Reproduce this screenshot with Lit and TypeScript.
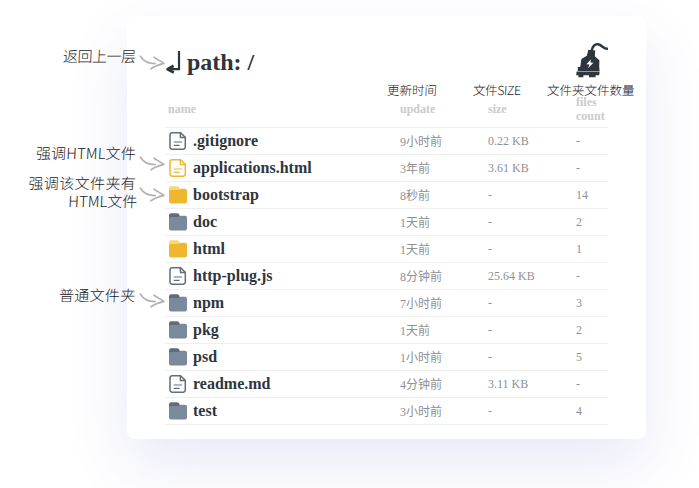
import { LitElement, html, svg, css } from "lit";
import { customElement, property } from "lit/decorators.js";

type Kind = "file" | "page" | "dir" | "web";
interface Entry { name: string; kind: Kind; update: string; size: string; count: string; }

const entries: Entry[] = [
  { name: ".gitignore", kind: "file", update: "9小时前", size: "0.22 KB", count: "-" },
  { name: "applications.html", kind: "page", update: "3年前", size: "3.61 KB", count: "-" },
  { name: "bootstrap", kind: "web", update: "8秒前", size: "-", count: "14" },
  { name: "doc", kind: "dir", update: "1天前", size: "-", count: "2" },
  { name: "html", kind: "web", update: "1天前", size: "-", count: "1" },
  { name: "http-plug.js", kind: "file", update: "8分钟前", size: "25.64 KB", count: "-" },
  { name: "npm", kind: "dir", update: "7小时前", size: "-", count: "3" },
  { name: "pkg", kind: "dir", update: "1天前", size: "-", count: "2" },
  { name: "psd", kind: "dir", update: "1小时前", size: "-", count: "5" },
  { name: "readme.md", kind: "file", update: "4分钟前", size: "3.11 KB", count: "-" },
  { name: "test", kind: "dir", update: "3小时前", size: "-", count: "4" },
];

@customElement("entry-icon")
export class EntryIcon extends LitElement {
  @property() kind: Kind = "file";
  static styles = css`
    :host { display: block; width: 18px; height: 18px; }
    svg { display: block; }
  `;
  render() {
    const warm = this.kind === "page" || this.kind === "web";
    const isFile = this.kind === "file" || this.kind === "page";
    const main = warm ? "#efb730" : isFile ? "#646d7a" : "#7b899c";
    const back = warm ? "#f8d775" : "#626c78";
    return html`<svg width="18" height="18" viewBox="0 0 18 18">
      ${isFile
        ? svg`<g fill="none" stroke=${main} stroke-width="1.5" stroke-linejoin="round" stroke-linecap="round">
            <path d="M3.2 .8H11.6L16.3 5.4V15A2.2 2.2 0 0 1 14.1 17.2H3.2A2.2 2.2 0 0 1 1 15V3A2.2 2.2 0 0 1 3.2 .8Z"/>
            <path d="M11.4 1V5.6H16"/><path stroke-width="1.2" d="M5.2 10H12.6M5.2 13.3H10.2"/></g>`
        : svg`<path fill=${back} d="M0 2.2A2 2 0 0 1 2 .2H8.2Q9.4 .2 10 1.3L11 3.2H14V8H0Z"/>
            <path fill=${main} d="M0 5.6Q0 4 1.6 4H9Q10 4 10.7 3.3Q11.2 2.8 12.2 2.8H16A2 2 0 0 1 18 4.8V15.4A2 2 0 0 1 16 17.4H2A2 2 0 0 1 0 15.4Z"/>`}
    </svg>`;
  }
}

@customElement("hand-note")
export class HandNote extends LitElement {
  static styles = css`
    :host { display: flex; align-items: flex-start; justify-content: flex-end; }
    .words { text-align: right; white-space: pre; transform: skewX(-3deg); }
    svg { display: block; flex: none; margin: var(--drop, 6px) 0 0 3px; }
  `;
  render() {
    return html`<div class="words"><slot></slot></div>
      <svg width="26" height="18" viewBox="0 0 26 18" fill="none" stroke="#b3b3b3" stroke-width="1.7" stroke-linecap="round" stroke-linejoin="round">
        <path d="M1.4 2.2C4.4 7.2 9.5 9.6 16.2 9.6M15 3.2L25 9.4Q17 11.4 12 14.8"/>
      </svg>`;
  }
}

@customElement("app-root")
export class AppRoot extends LitElement {
  static styles = css`
    :host {
      display: block; position: relative; box-sizing: border-box; height: 488px; overflow: hidden;
      padding: 16px 53px 0 127px; background: #fff; color: #2e353d;
      font-family: "Liberation Serif", "Noto Sans CJK SC", serif;
    }
    .card {
      box-sizing: border-box; height: 423px; padding: 0 38px; border-radius: 8px; background: #fff;
      box-shadow: 0 25px 60px rgba(76, 88, 200, .13);
    }
    header { display: flex; justify-content: space-between; height: 75px; }
    .path { display: flex; align-items: flex-start; padding-top: 31px; }
    .back { display: block; margin-top: 4px; }
    h1 { margin: 1px 0 0 6px; font-size: 24px; line-height: 28px; letter-spacing: -.05px; }
    .plug { display: block; margin-top: 26px; }
    .row {
      box-sizing: border-box; display: grid; grid-template-columns: 235px 88px 88px 32px; align-items: center;
      height: 27px; border-bottom: 1px solid #eeeff0; color: #8f9193; font-size: 12px; white-space: nowrap;
    }
    .head { height: 37px; color: #c9cbcd; font-weight: bold; font-size: 12px; line-height: 14px; }
    .head span:first-child { padding-left: 3px; }
    .head span:last-child { white-space: normal; }
    .title { display: flex; align-items: center; gap: 6px; padding-left: 4px; color: #2e353d; font-size: 16px; font-weight: bold; }
    .note {
      position: absolute; color: #202327; font-family: "Noto Sans CJK SC", sans-serif; font-weight: 300;
      font-size: 15px; line-height: 18px; white-space: nowrap;
    }
    .left { right: 534px; }
    .up { top: 47px; letter-spacing: -.5px; --drop: 7px; }
    .page { top: 144px; letter-spacing: .1px; --drop: 11px; }
    .web { top: 174px; letter-spacing: .4px; --drop: 12px; }
    .hang { margin-right: -2px; letter-spacing: 0; }
    .plain { top: 286px; letter-spacing: .3px; --drop: 6px; }
    .time, .size, .count { top: 81px; font-size: 12.5px; transform: skewX(-3deg); }
    .time { left: 387px; }
    .size { left: 473px; letter-spacing: -.4px; }
    .count { left: 547px; }
  `;
  render() {
    return html`
      <main class="card">
        <header>
          <div class="path">
            <svg class="back" width="16" height="24" viewBox="0 0 16 24" fill="none" stroke="#2e353d">
              <path stroke-width="2.2" d="M14 0V18.2H3"/><path stroke-width="2.8" stroke-linejoin="round" d="M8.6 14.8L2.6 18.2L8.8 21.4"/>
            </svg>
            <h1>path: /</h1>
          </div>
          <svg class="plug" width="33" height="36" viewBox="0 0 33 36">
            <path fill="none" stroke="#2e353d" stroke-width="2.5" d="M16.6 9C17.4 4 20 1.8 23 2.3C27.4 3 28.4 7.4 33 6.8"/>
            <path fill="#2e353d" d="M13.4 7.8L20.2 8.4L19.8 14.2L24.4 18.2L24.2 24.4L24.6 28.9H2.8V25H5.2L6.4 17L11.8 13.8Z"/>
            <path fill="#2e353d" d="M1.6 29.6H24.6L24.2 33.2H20.6V35.2H14V33.2H8.4V35.2H3.4V33.2H1.2Z"/>
            <path fill="#fff" d="M16 17.2L11.4 22.2L14.6 22.6L13 26.2L18.4 20.8L15.4 20.4Z"/>
          </svg>
        </header>
        <div class="row head"><span>name</span><span>update</span><span>size</span><span>files count</span></div>
        ${entries.map((e) => html`<div class="row">
          <span class="title"><entry-icon .kind=${e.kind}></entry-icon>${e.name}</span>
          <span>${e.update}</span><span>${e.size}</span><span>${e.count}</span>
        </div>`)}
      </main>
      <hand-note class="note left up">返回上一层</hand-note>
      <hand-note class="note left page">强调HTML文件</hand-note>
      <hand-note class="note left web">强调该文件夹有<br><span class="hang">HTML文件</span></hand-note>
      <hand-note class="note left plain">普通文件夹</hand-note>
      <span class="note time">更新时间</span>
      <span class="note size">文件SIZE</span>
      <span class="note count">文件夹文件数量</span>`;
  }
}
